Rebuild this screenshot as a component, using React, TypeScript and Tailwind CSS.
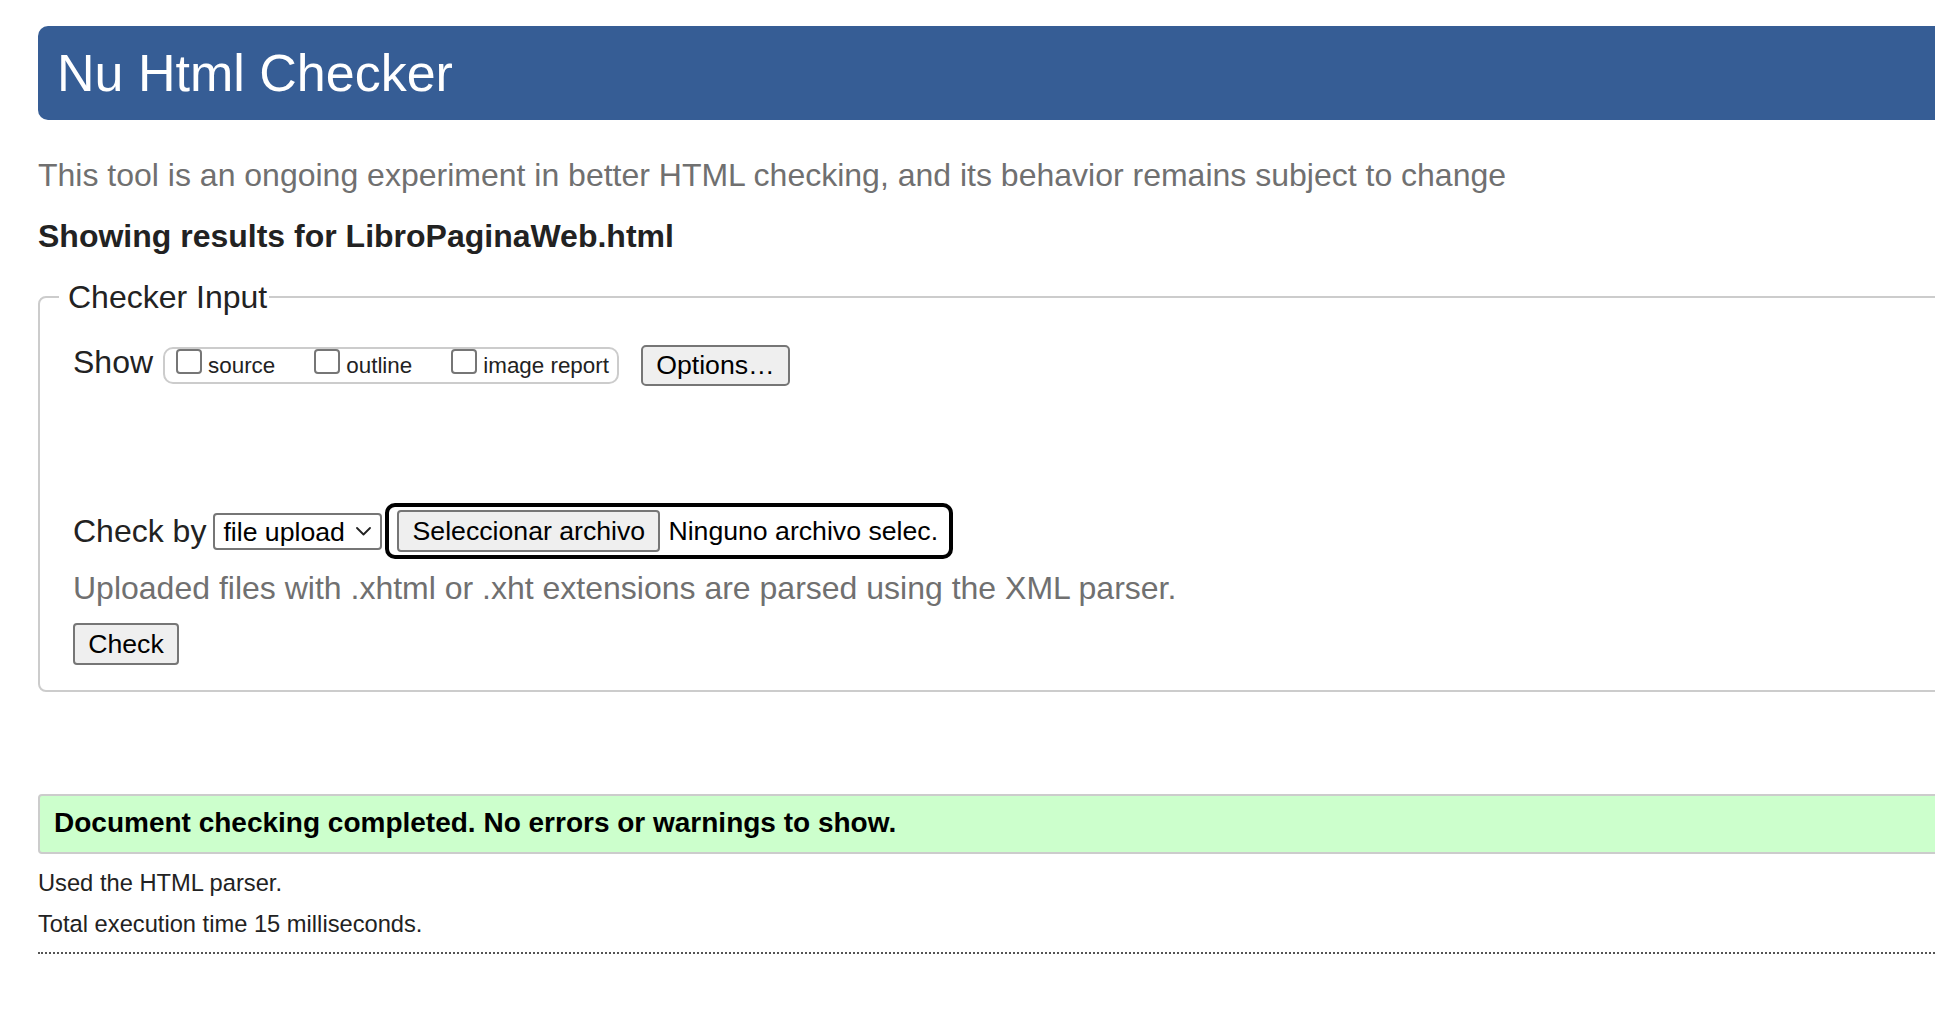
import React from "react";

function Checkbox({ label }: { label: string }) {
  return (
    <label className="flex items-start">
      <span className="ml-[8px] mr-[6px] w-[26px] h-[25px] border-2 border-[#767676] rounded-[4px] bg-white" />
      <span className="mt-[4px] text-[22.4px] leading-[26px] text-[#222]">{label}</span>
    </label>
  );
}

export default function App() {
  return (
    <div className="w-full min-h-screen overflow-hidden bg-white font-['Liberation_Sans',Arial,sans-serif] text-[#222]">
      <div className="ml-[38px] w-[1920px]">
        <header className="mt-[26px] h-[94px] bg-[#365d95] rounded-l-[10px] flex items-center pl-[19px]">
          <h1 className="text-[52px] leading-[52px] text-white font-normal">Nu Html Checker</h1>
        </header>

        <p className="mt-[35px] text-[32px] leading-[40px] text-[#707070]">
          This tool is an ongoing experiment in better HTML checking, and its behavior remains subject to change
        </p>

        <h2 className="mt-[21px] text-[32px] leading-[40px] font-bold text-[#222]">
          Showing results for LibroPaginaWeb.html
        </h2>

        <fieldset className="mt-[21px] border-2 border-[#ccc] rounded-[8px] pl-[19px] pt-[25px] pb-[25px]">
          <legend className="pl-[9px] pr-[2px] text-[32px] leading-[40px] text-[#222]">Checker Input</legend>
          <div className="pl-[14px]">
            <div className="flex items-start">
              <span className="text-[32px] leading-[40px] mr-[10px]">Show</span>
              <div className="mt-[5px] h-[37px] border-2 border-[#ccc] rounded-[10px] pl-[3px] pr-[8px] flex items-start gap-[31px]">
                <Checkbox label="source" />
                <Checkbox label="outline" />
                <Checkbox label="image report" />
              </div>
              <button className="ml-[22px] mt-[3px] w-[149px] h-[41px] bg-[#efefef] border-2 border-[#767676] rounded-[5px] text-[26.67px] leading-none text-black flex items-center justify-center">
                Options…
              </button>
            </div>

            <div className="mt-[117px] flex items-start">
              <span className="mt-[8px] text-[32px] leading-[40px] mr-[7px]">Check by</span>
              <div className="mt-[10px] w-[169px] h-[37px] border-2 border-[#767676] rounded-[4px] flex items-center justify-between pl-[8px] pr-[9px] bg-white">
                <span className="mt-[2px] text-[26.67px] leading-none text-black">file upload</span>
                <svg width="15" height="9" viewBox="0 0 15 9" fill="none">
                  <path d="M1 1 L7.5 7.5 L14 1" stroke="#222" strokeWidth="1.8" strokeLinecap="round" strokeLinejoin="round" />
                </svg>
              </div>
              <div className="ml-[3px] h-[56px] border-4 border-black rounded-[10px] flex items-center pl-[8px] pr-[11px]">
                <button className="h-[42px] w-[263px] bg-[#efefef] border-2 border-[#767676] rounded-[4px] text-[26.67px] leading-none text-black flex items-center justify-center">
                  Seleccionar archivo
                </button>
                <span className="ml-[8px] text-[26.67px] leading-none text-black">Ninguno archivo selec.</span>
              </div>
            </div>

            <p className="mt-[9px] text-[32px] leading-[40px] text-[#707070]">
              Uploaded files with .xhtml or .xht extensions are parsed using the XML parser.
            </p>

            <button className="mt-[15px] w-[106px] h-[42px] bg-[#efefef] border-2 border-[#767676] rounded-[4px] text-[26.67px] leading-none text-black flex items-center justify-center">
              Check
            </button>
          </div>
        </fieldset>

        <div className="mt-[102px] h-[60px] border-2 border-[#ccc] rounded-[4px] bg-[#ccffcc] pl-[14px]">
          <p className="text-[28px] leading-[54px] font-bold text-black">
            Document checking completed. No errors or warnings to show.
          </p>
        </div>

        <p className="mt-[9px] text-[23.7px] leading-[41px] text-[#222]">Used the HTML parser.</p>
        <p className="text-[23.7px] leading-[41px] text-[#222]">Total execution time 15 milliseconds.</p>

        <div className="mt-[7px] border-t-2 border-dotted border-[#555]" />
      </div>
    </div>
  );
}
